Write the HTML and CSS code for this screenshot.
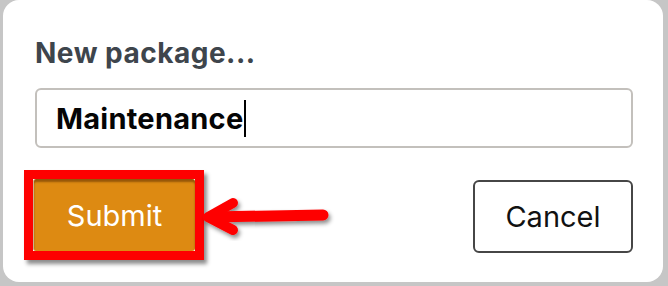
FILE: index.html
```html
<!DOCTYPE html>
<html>
<head>
<meta charset="utf-8">
<link rel="stylesheet" href="styles.css">
</head>
<body>
<div class="panel">
  <h1 class="title">New package...</h1>
  <div class="field"><span class="value">Maintenance</span><span class="caret"></span></div>
  <div class="footer">
    <div class="highlight"><button class="btn submit">Submit</button></div>
    <button class="btn cancel">Cancel</button>
  </div>
  <svg class="arrow" width="140" height="45" viewBox="0 0 140 45">
    <defs>
      <filter id="sh" x="-20%" y="-40%" width="140%" height="180%">
        <feDropShadow dx="2" dy="3" stdDeviation="2" flood-color="#000" flood-opacity="0.45"/>
      </filter>
    </defs>
    <g filter="url(#sh)" stroke="#fe0000" fill="none" stroke-linecap="round" stroke-linejoin="round">
      <path d="M33 8 L8 22 L33 35" stroke-width="10"/>
      <path d="M10 22 L123 20" stroke-width="11"/>
    </g>
  </svg>
</div>
</body>
</html>
```

FILE: styles.css
```css
html, body {
  margin: 0;
  padding: 0;
}
body {
  background: #c6c6c6;
  padding: 0 5px 4px 3px;
  width: 668px;
  height: 286px;
  box-sizing: border-box;
  overflow: hidden;
  font-family: Inter, "Liberation Sans", sans-serif;
}
.panel {
  position: relative;
  background: #ffffff;
  height: 282px;
  border-radius: 16px;
  padding: 36px 30px 0 32px;
  box-sizing: border-box;
}
.title {
  margin: 0;
  font-size: 28px;
  line-height: 34px;
  font-weight: 700;
  color: #3e454c;
  letter-spacing: 0.5px;
}
.field {
  margin-top: 18px;
  height: 60px;
  box-sizing: border-box;
  border: 2px solid #c3c0bc;
  border-radius: 6px;
  padding-left: 19px;
  display: flex;
  align-items: center;
}
.value {
  font-size: 29px;
  font-weight: 700;
  color: #050505;
  letter-spacing: 0.25px;
}
.caret {
  display: inline-block;
  width: 2px;
  height: 37px;
  background: #000;
  margin-left: 1px;
}
.footer {
  display: flex;
  justify-content: space-between;
  align-items: flex-start;
  margin-top: 22px;
  margin-left: -11px;
}
.highlight {
  border: 9px solid #fe0000;
  box-shadow: 3px 4px 4px rgba(0, 0, 0, 0.45);
  display: flex;
}
.btn {
  font-family: Inter, "Liberation Sans", sans-serif;
  font-size: 29px;
  font-weight: 400;
  height: 73px;
  box-sizing: border-box;
  border-radius: 5px;
  padding: 0;
  margin: 0;
  cursor: pointer;
}
.submit {
  width: 162px;
  height: 72px;
  background: #dd8a12;
  color: #ffffff;
  border: none;
  border-left: 1px solid #c9b58f;
  border-radius: 3px;
  box-shadow: inset 0 3px 2px rgba(90, 45, 0, 0.55);
}
.cancel {
  width: 160px;
  margin-top: 10px;
  background: #ffffff;
  color: #111111;
  border: 2px solid #464646;
  border-radius: 6px;
}
.arrow {
  position: absolute;
  left: 197px;
  top: 195px;
  overflow: visible;
}
```
